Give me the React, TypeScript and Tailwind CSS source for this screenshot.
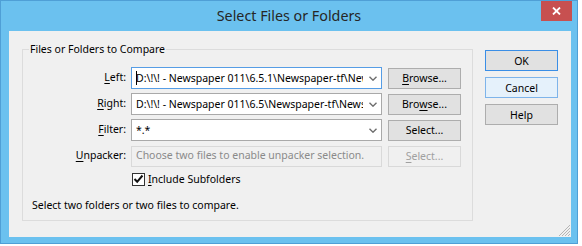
import React from "react";

const Chevron = () => (
  <svg width="8" height="5" viewBox="0 0 8 5" className="shrink-0">
    <path d="M0.5 0.8 L4 4.2 L7.5 0.8" fill="none" stroke="#6d6d6d" strokeWidth="1.4" />
  </svg>
);

function Combo({ text, focused, caret }: { text: string; focused?: boolean; caret?: boolean }) {
  return (
    <div
      className={`w-[251px] h-[22px] bg-white border flex items-center pl-[4px] pr-[4px] ${
        focused ? "border-[#569de5]" : "border-[#a9a9a9]"
      }`}
    >
      <div className="relative flex-1 overflow-hidden whitespace-nowrap text-[10.5px] leading-[20px] text-black">
        {text}
        {caret && <span className="absolute left-0 top-[3px] w-[1px] h-[14px] bg-black" />}
      </div>
      <div className="ml-[6px]">
        <Chevron />
      </div>
    </div>
  );
}

function Btn({
  children,
  variant = "normal",
}: {
  children: React.ReactNode;
  variant?: "normal" | "default" | "hover" | "disabled";
}) {
  const cls =
    variant === "default"
      ? "border-[#3a8ee6] bg-[#e1e1e1] text-black"
      : variant === "hover"
      ? "border-[#7eb4ea] bg-[#e5f1fb] text-black"
      : variant === "disabled"
      ? "border-[#d9d9d9] bg-[#f0f0f0] text-[#a0a0a0]"
      : "border-[#adadad] bg-[#e1e1e1] text-black";
  return (
    <div className={`w-[73px] h-[21px] border flex items-center justify-center text-[10.5px] leading-[18px] ${cls}`}>
      {children}
    </div>
  );
}

export default function App() {
  return (
    <div className="w-[582px] h-[246px] bg-white font-['Noto_Sans',sans-serif]">
      <div className="w-[578px] h-[244px] bg-[#6bc1ef] border border-[#4f9fd6] flex flex-col">
        {/* Title bar */}
        <div className="h-[30px] flex items-start shrink-0">
          <div className="w-[36px]" />
          <div className="flex-1 text-center text-[14.3px] leading-[30px] text-[#262626]">
            Select Files or Folders
          </div>
          <div className="w-[31px] h-[20px] mr-[5px] bg-[#c75050] flex items-center justify-center">
            <svg width="9" height="8" viewBox="0 0 9 8">
              <path d="M1 0.5 L8 7.5 M8 0.5 L1 7.5" stroke="white" strokeWidth="1.8" />
            </svg>
          </div>
        </div>

        {/* Client area */}
        <div className="ml-[8px] w-[562px] h-[206px] bg-[#f0f0f0] relative flex items-start pt-[18px] pl-[13px] text-[10.5px] text-black">
          {/* Group box */}
          <div className="relative w-[451px] h-[172px] border border-[#dcdcdc] pt-[17px]">
            <div className="absolute left-[6px] top-[-9px] px-[1px] bg-[#f0f0f0] leading-[16px]">
              Files or Folders to Compare
            </div>

            <div className="flex flex-col gap-[4px]">
              <div className="flex items-center h-[22px]">
                <div className="w-[104px] text-right pr-[1px]">
                  <span className="underline underline-offset-2">L</span>eft:
                </div>
                <div className="ml-[4px]">
                  <Combo focused caret text={"D:\\!\\! - Newspaper 011\\6.5.1\\Newspaper-tf\\Newspaper-tf.dat"} />
                </div>
                <div className="ml-[6px]">
                  <Btn>
                    <span className="underline underline-offset-2">B</span>rowse...
                  </Btn>
                </div>
              </div>

              <div className="flex items-center h-[22px]">
                <div className="w-[104px] text-right pr-[1px]">
                  <span className="underline underline-offset-2">R</span>ight:
                </div>
                <div className="ml-[4px]">
                  <Combo text={"D:\\!\\! - Newspaper 011\\6.5\\Newspaper-tf\\Newspaper-tf.dat"} />
                </div>
                <div className="ml-[6px]">
                  <Btn>
                    Bro<span className="underline underline-offset-2">w</span>se...
                  </Btn>
                </div>
              </div>

              <div className="flex items-center h-[22px]">
                <div className="w-[104px] text-right pr-[1px]">
                  <span className="underline underline-offset-2">F</span>ilter:
                </div>
                <div className="ml-[4px]">
                  <Combo text="*.*" />
                </div>
                <div className="ml-[6px]">
                  <Btn>Select...</Btn>
                </div>
              </div>

              <div className="flex items-center h-[22px]">
                <div className="w-[104px] text-right pr-[1px]">
                  <span className="underline underline-offset-2">U</span>npacker:
                </div>
                <div className="ml-[4px] w-[251px] h-[21px] border border-[#d9d9d9] bg-[#f0f0f0] flex items-center pl-[4px] text-[#8a8a8a] whitespace-nowrap overflow-hidden">
                  Choose two files to enable unpacker selection.
                </div>
                <div className="ml-[6px]">
                  <Btn variant="disabled">
                    <span className="underline underline-offset-2">S</span>elect...
                  </Btn>
                </div>
              </div>
            </div>

            <div className="flex items-center mt-[5px] ml-[109px] h-[14px]">
              <div className="w-[13px] h-[13px] border border-[#333333] bg-white flex items-center justify-center">
                <svg width="11" height="10" viewBox="0 0 11 10">
                  <path d="M1.5 5 L4.2 7.8 L9.5 1.5" fill="none" stroke="#111" strokeWidth="2" />
                </svg>
              </div>
              <div className="ml-[3px] leading-[16px]">
                <span className="underline underline-offset-2">I</span>nclude Subfolders
              </div>
            </div>

            <div className="mt-[11px] ml-[9px] leading-[16px]">Select two folders or two files to compare.</div>
          </div>

          {/* Button column */}
          <div className="ml-[12px] mt-[1px] flex flex-col gap-[6px]">
            <Btn variant="default">OK</Btn>
            <Btn variant="hover">Cancel</Btn>
            <Btn>Help</Btn>
          </div>

          {/* Resize grip */}
          <svg className="absolute right-0 bottom-0" width="12" height="12" viewBox="0 0 12 12">
            <path d="M11 3 L3 11 M11 6 L6 11 M11 9 L9 11 M11 0 L0 11" stroke="#b5b5b5" strokeWidth="1" />
          </svg>
        </div>
      </div>
    </div>
  );
}
